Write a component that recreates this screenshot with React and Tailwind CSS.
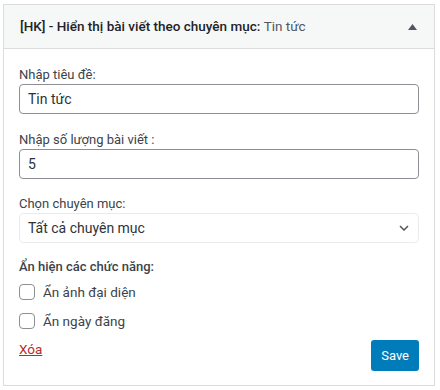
import React from 'react'

const font = { fontFamily: 'Roboto, "Noto Sans", sans-serif' }

const WidgetForm = () => {
  return (
    <div className="pl-[3px] pt-[4px] bg-white min-h-screen" style={font}>
      <div className="w-[432px] border border-[#dcdcde] bg-white">
        {/* Header */}
        <div className="h-[44px] flex items-center justify-between pl-4 pr-[16px] bg-[#f6f7f7] border-b border-[#dcdcde]">
          <h3 className="text-[13.5px] text-[#1d2327] font-medium">
            [HK] - Hiển thị bài viết theo chuyên mục: <span className="font-normal text-[#50575e]">Tin tức</span>
          </h3>
          <svg width="9" height="6" viewBox="0 0 9 6" className="mr-[1px]">
            <path d="M4.5 0 L9 6 L0 6 Z" fill="#50575e" />
          </svg>
        </div>

        {/* Body */}
        <div className="px-[15px] pt-[16px] pb-[14px] text-[13px] text-[#3c434a]">
          <label className="block leading-[19px]">Nhập tiêu đề:</label>
          <input
            type="text"
            defaultValue="Tin tức"
            className="w-full h-[30px] px-2 border border-[#8c8f94] rounded-[4px] text-[14px] text-[#2c3338] outline-none"
          />

          <label className="block leading-[19px] mt-[16px]">Nhập số lượng bài viết :</label>
          <input
            type="text"
            defaultValue="5"
            className="w-full h-[30px] px-2 border border-[#8c8f94] rounded-[4px] text-[14px] text-[#2c3338] outline-none"
          />

          <label className="block leading-[19px] mt-[15px]">Chọn chuyên mục:</label>
          <div className="w-full h-[30px] pl-2 pr-[9px] border border-[#ebebeb] rounded-[4px] flex items-center justify-between text-[14px] text-[#2c3338]">
            <span>Tất cả chuyên mục</span>
            <svg width="10" height="6" viewBox="0 0 10 6">
              <path d="M1 1 L5 5 L9 1" fill="none" stroke="#50575e" strokeWidth="1.5" />
            </svg>
          </div>

          <p className="mt-[14px] leading-[19px] font-medium text-[#3c434a]">Ẩn hiện các chức năng:</p>
          <div className="mt-[8px] flex flex-col gap-[13px] text-[13.5px]">
            <label className="flex items-center gap-2 h-[16px]">
              <span className="w-4 h-4 border border-[#8c8f94] rounded-[4px] bg-white"></span>
              <span>Ẩn ảnh đại diện</span>
            </label>
            <label className="flex items-center gap-2 h-[16px]">
              <span className="w-4 h-4 border border-[#8c8f94] rounded-[4px] bg-white"></span>
              <span>Ẩn ngày đăng</span>
            </label>
          </div>

          <div className="mt-[11px] flex items-start justify-between">
            <a href="#" className="text-[#b32d2e] underline leading-[19px] text-[13.5px]">Xóa</a>
            <button className="h-[31px] px-[10px] rounded-[3px] bg-[#007cba] text-white text-[13px]">Save</button>
          </div>
        </div>
      </div>
    </div>
  )
}

export default function App() {
  return <WidgetForm />
}
